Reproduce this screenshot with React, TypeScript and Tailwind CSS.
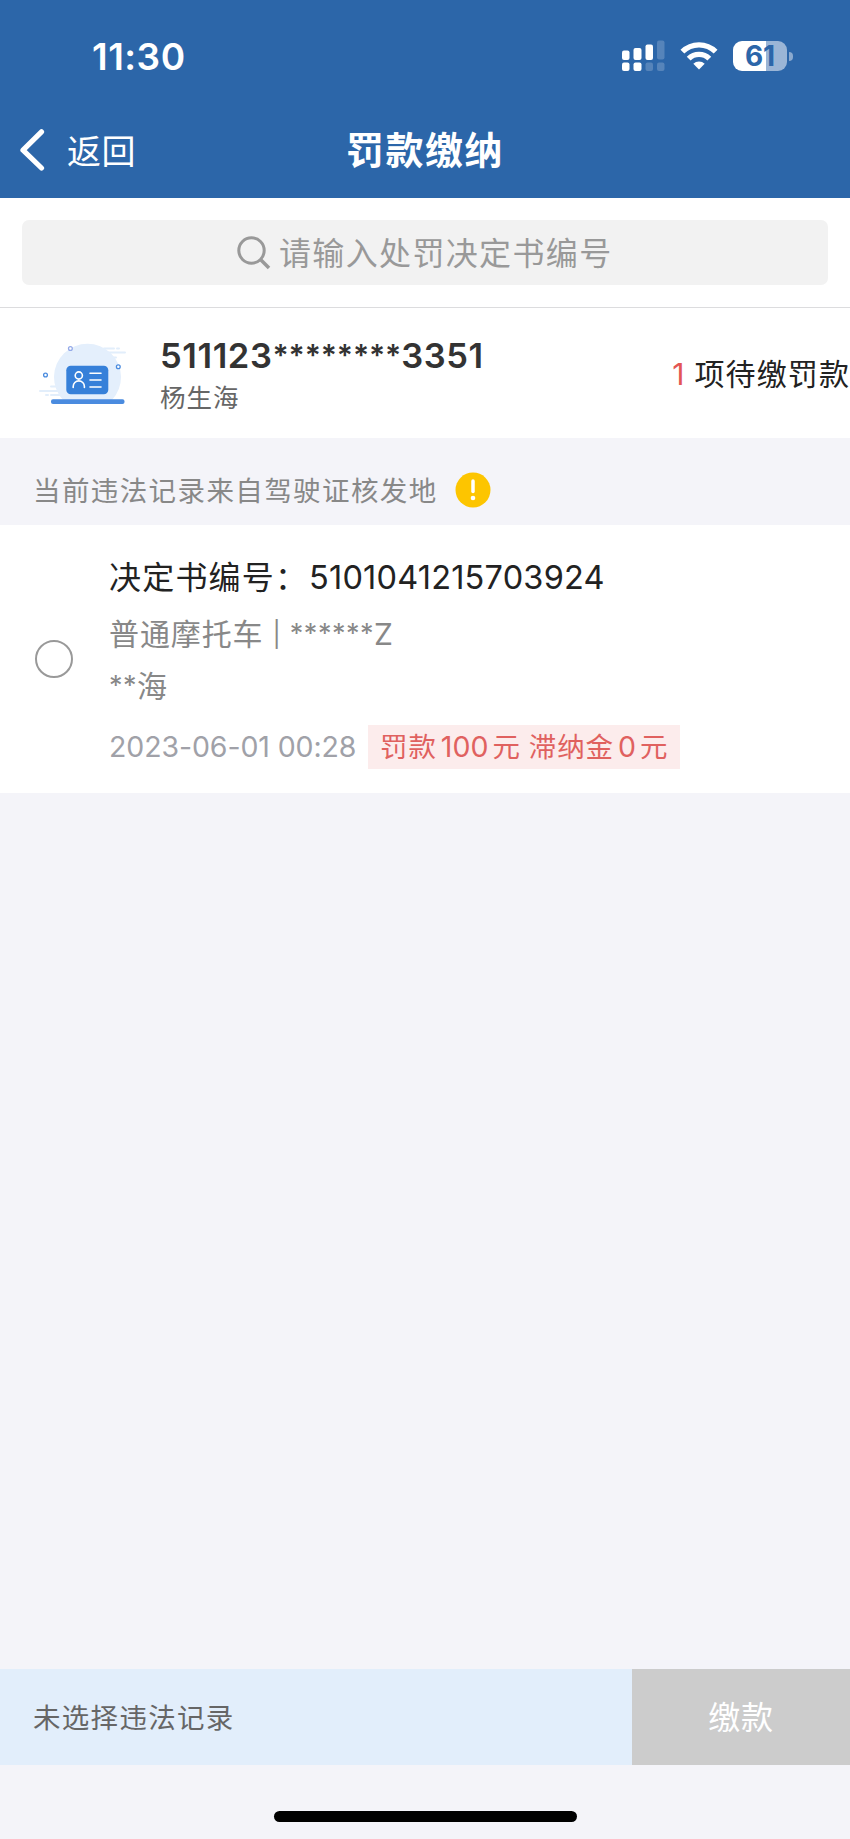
import { useState } from "react";

const RECORDS = [
  {
    id: "5101041215703924",
    vehicle: "普通摩托车",
    plate: "******",
    plateSuffix: "Z",
    owner: "海",
    time: "2023-06-01 00:28",
    fine: 100,
    lateFee: 0,
  },
];

function SignalIcon() {
  return (
    <svg width="43" height="32" viewBox="0 0 43 32" fill="#fff">
      <rect x="0" y="10.5" width="7.5" height="9.5" rx="2" />
      <rect x="11.5" y="8" width="8" height="12" rx="2" />
      <rect x="23.5" y="4.5" width="7.5" height="15.5" rx="2" />
      <rect x="35" y="0.5" width="7.5" height="19" rx="2" opacity="0.2" />
      <rect x="0" y="22.5" width="7.5" height="8.5" rx="2" />
      <rect x="11.5" y="22.5" width="8" height="8.5" rx="2" />
      <rect x="23.5" y="22.5" width="7.5" height="8.5" rx="2" opacity="0.2" />
      <rect x="35" y="22.5" width="7.5" height="8.5" rx="2" opacity="0.2" />
    </svg>
  );
}

function WifiIcon() {
  return (
    <svg width="38" height="28" viewBox="0 0 38 28">
      <g fill="none" stroke="#fff" strokeWidth="5.4">
        <path d="M2.4 9.7a23.6 23.6 0 0 1 33.2 0" />
        <path d="M8.7 16.7a14.5 14.5 0 0 1 20.6 0" />
      </g>
      <path d="M19 27.6l-5.7-5.8a8.2 8.2 0 0 1 11.4 0z" fill="#fff" />
    </svg>
  );
}

function Battery({ level }: { level: number }) {
  return (
    <div className="flex items-center gap-[2px]">
      <div className="flex h-[30px] w-[54px] items-center justify-center rounded-[9px] bg-[linear-gradient(90deg,#fff_62%,#9ab5d6_62%)]">
        <span className="text-[28px] leading-none font-bold tracking-[-0.2px] text-[#2c66a9]">{level}</span>
      </div>
      <div className="h-[9px] w-[4px] rounded-r-full bg-[#8aa9cf]" />
    </div>
  );
}

function StatusBar() {
  return (
    <div className="flex h-[102px] items-start justify-between pt-[41px] pr-[57px] pl-[92px]">
      <span className="pt-[1px] text-[37px] leading-[30px] font-semibold tracking-[0.5px]">11:30</span>
      <div className="flex h-[30px] items-center">
        <SignalIcon />
        <div className="w-[15px]" />
        <WifiIcon />
        <div className="w-[15px]" />
        <Battery level={61} />
      </div>
    </div>
  );
}

function LicenseIcon() {
  return (
    <svg width="88" height="64" viewBox="0 0 88 64">
      <g stroke="#e2eefb" strokeWidth="2" strokeLinecap="round">
        <path d="M65 6.5h10M78 6.5h2M66 10.5h20M68 15.5h9M12 44.5h10M1 49h20M7 53h2M12 53h10" />
      </g>
      <path d="M24 58a33.5 33.5 0 1 1 49 0z" fill="#e4effc" />
      <rect x="27.3" y="23.7" width="42" height="28.5" rx="4.5" fill="#3680d9" />
      <g fill="none" stroke="#fff" strokeWidth="1.6" strokeLinecap="round">
        <circle cx="39.8" cy="33.5" r="3.6" />
        <path d="M34.2 45.5v-1a5.6 5.6 0 0 1 11.2 0v1" />
        <path d="M51 31.3h11M51 38h11M51 45h11" />
      </g>
      <rect x="12" y="57.3" width="73.5" height="4.7" rx="2" fill="#4a8bdf" />
      <g fill="#fff" strokeWidth="1.3">
        <circle cx="31.4" cy="6.5" r="1.9" stroke="#93a9e8" />
        <circle cx="6.5" cy="33" r="1.9" stroke="#4a8bdf" />
        <circle cx="79.3" cy="24.7" r="1.9" stroke="#4a8bdf" />
      </g>
    </svg>
  );
}

export default function App() {
  const [selected, setSelected] = useState<string[]>([]);

  const toggle = (id: string) => {
    setSelected(prev => (prev.includes(id) ? prev.filter(x => x !== id) : [...prev, id]));
  };

  return (
    <div className="flex h-[1839px] w-[850px] flex-col overflow-hidden bg-[#f4f4f9] font-['Inter','Noto_Sans_CJK_SC',sans-serif] whitespace-nowrap">
      <header className="h-[198px] shrink-0 bg-[#2c66a9] text-white">
        <StatusBar />
        <div className="grid h-[96px] grid-cols-3 items-center">
          <button className="flex items-center pl-[20px]">
            <svg width="25" height="42" viewBox="0 0 25 42" fill="none" stroke="#fff" strokeWidth="5.2" strokeLinecap="round" strokeLinejoin="round">
              <path d="M21.5 2.8L3 21.2 21.5 39" />
            </svg>
            <span className="ml-[22px] pt-[3px] text-[34px] leading-[48px] tracking-[0.5px]">返回</span>
          </button>
          <h1 className="text-center text-[38px] leading-[48px] font-bold tracking-[1.5px]">罚款缴纳</h1>
        </div>
      </header>

      <div className="flex h-[110px] shrink-0 items-start border-b border-[#dcdcde] bg-white px-[22px] pt-[22px]">
        <div className="flex h-[65px] flex-1 items-center rounded-[7px] bg-[#f2f2f2] pl-[215px] text-[#999]">
          <svg width="34" height="34" viewBox="0 0 34 34" fill="none" stroke="#999" strokeWidth="3">
            <circle cx="14.5" cy="14.5" r="12.7" />
            <path d="M23.5 23.5l8.5 8.5" strokeWidth="3.5" />
          </svg>
          <span className="ml-[8px] pt-[2px] text-[32px] leading-[48px] tracking-[1.35px]">请输入处罚决定书编号</span>
        </div>
      </div>

      <div className="flex h-[130px] shrink-0 items-start bg-white pt-[34px] pl-[39px]">
        <LicenseIcon />
        <div className="ml-[33px]">
          <div className="mt-[-6px] flex text-[34.5px] leading-[40px] font-semibold tracking-[0.6px] text-[#333]">
            <span>511123</span>
            <span className="mt-[-1px] text-[30px] tracking-[-0.1px]">********</span>
            <span>3351</span>
          </div>
          <div className="mt-[3px] text-[25.5px] leading-[38px] tracking-[1px] text-[#666]">杨生海</div>
        </div>
        <div className="ml-auto pt-[10px] text-[30px] leading-[44px] tracking-[1.1px] text-[#222]">
          <span className="mr-[9px] text-[#e35653]">1</span>项待缴罚款
        </div>
      </div>

      <div className="flex h-[87px] shrink-0 items-center pt-[17px] pl-[33px]">
        <span className="pt-[2px] text-[27.5px] leading-[40px] tracking-[1.4px] text-[#888]">当前违法记录来自驾驶证核发地</span>
        <svg className="ml-[17px]" width="36" height="36" viewBox="0 0 36 36">
          <circle cx="18" cy="18" r="17.5" fill="#fdc500" />
          <path d="M18 9v10.5" stroke="#fff" strokeWidth="3.5" strokeLinecap="round" />
          <circle cx="18" cy="26" r="2.3" fill="#fff" />
        </svg>
      </div>

      {RECORDS.map(r => (
        <div key={r.id} onClick={() => toggle(r.id)} className="flex h-[268px] shrink-0 items-start bg-white pl-[35px]">
          <div className={`mt-[115px] h-[38px] w-[38px] rounded-full border-2 border-[#999] ${selected.includes(r.id) ? "bg-[#2c66a9]" : "bg-white"}`} />
          <div className="pt-[29px] pl-[36px]">
            <div className="flex text-[32px] leading-[48px] text-[#222]">
              <span className="w-[200px] tracking-[1.2px]">决定书编号：</span>
              <span className="text-[32.5px] tracking-[0.2px]">{r.id}</span>
            </div>
            <div className="mt-[9px] flex text-[30px] leading-[46px] text-[#888]">
              <span className="tracking-[0.9px]">{r.vehicle}</span>
              <span className="ml-[9px] text-[25px]">|</span>
              <span className="ml-[9px] text-[27px] tracking-[0.5px]">{r.plate}</span>
              <span>{r.plateSuffix}</span>
            </div>
            <div className="mt-[6px] flex text-[30px] leading-[46px] text-[#888]">
              <span className="text-[27px] tracking-[0.5px]">**</span>
              <span>{r.owner}</span>
            </div>
            <div className="mt-[16px] flex h-[44px] items-center">
              <span className="w-[259px] text-[28.5px] tracking-[-0.1px] text-[#a0a1a8]">{r.time}</span>
              <span className="flex h-[44px] w-[312px] items-center bg-[#fcecec] pt-[1px] pl-[12px] text-[27.5px] tracking-[0.9px] text-[#e0615f]">
                <span>罚款</span>
                <span className="mr-[4px] ml-[4px] text-[28.5px] tracking-[0]">{r.fine}</span>
                <span>元</span>
                <span className="ml-[8px]">滞纳金</span>
                <span className="mr-[4px] ml-[4px] text-[28.5px] tracking-[0]">{r.lateFee}</span>
                <span>元</span>
              </span>
            </div>
          </div>
        </div>
      ))}

      <footer className="mt-auto h-[170px] shrink-0">
        <div className="flex h-[96px]">
          <div className="flex flex-1 items-center bg-[#e2eefb] pt-[3px] pl-[33px] text-[27.5px] tracking-[1.3px] text-[#666]">
            {selected.length ? `已选择${selected.length}条违法记录` : "未选择违法记录"}
          </div>
          <button className="w-[218px] bg-[#ccc] pt-[2px] text-[32px] tracking-[0.7px] text-white" disabled={!selected.length}>
            缴款
          </button>
        </div>
        <div className="mx-auto mt-[46px] h-[11px] w-[303px] rounded-full bg-black" />
      </footer>
    </div>
  );
}
